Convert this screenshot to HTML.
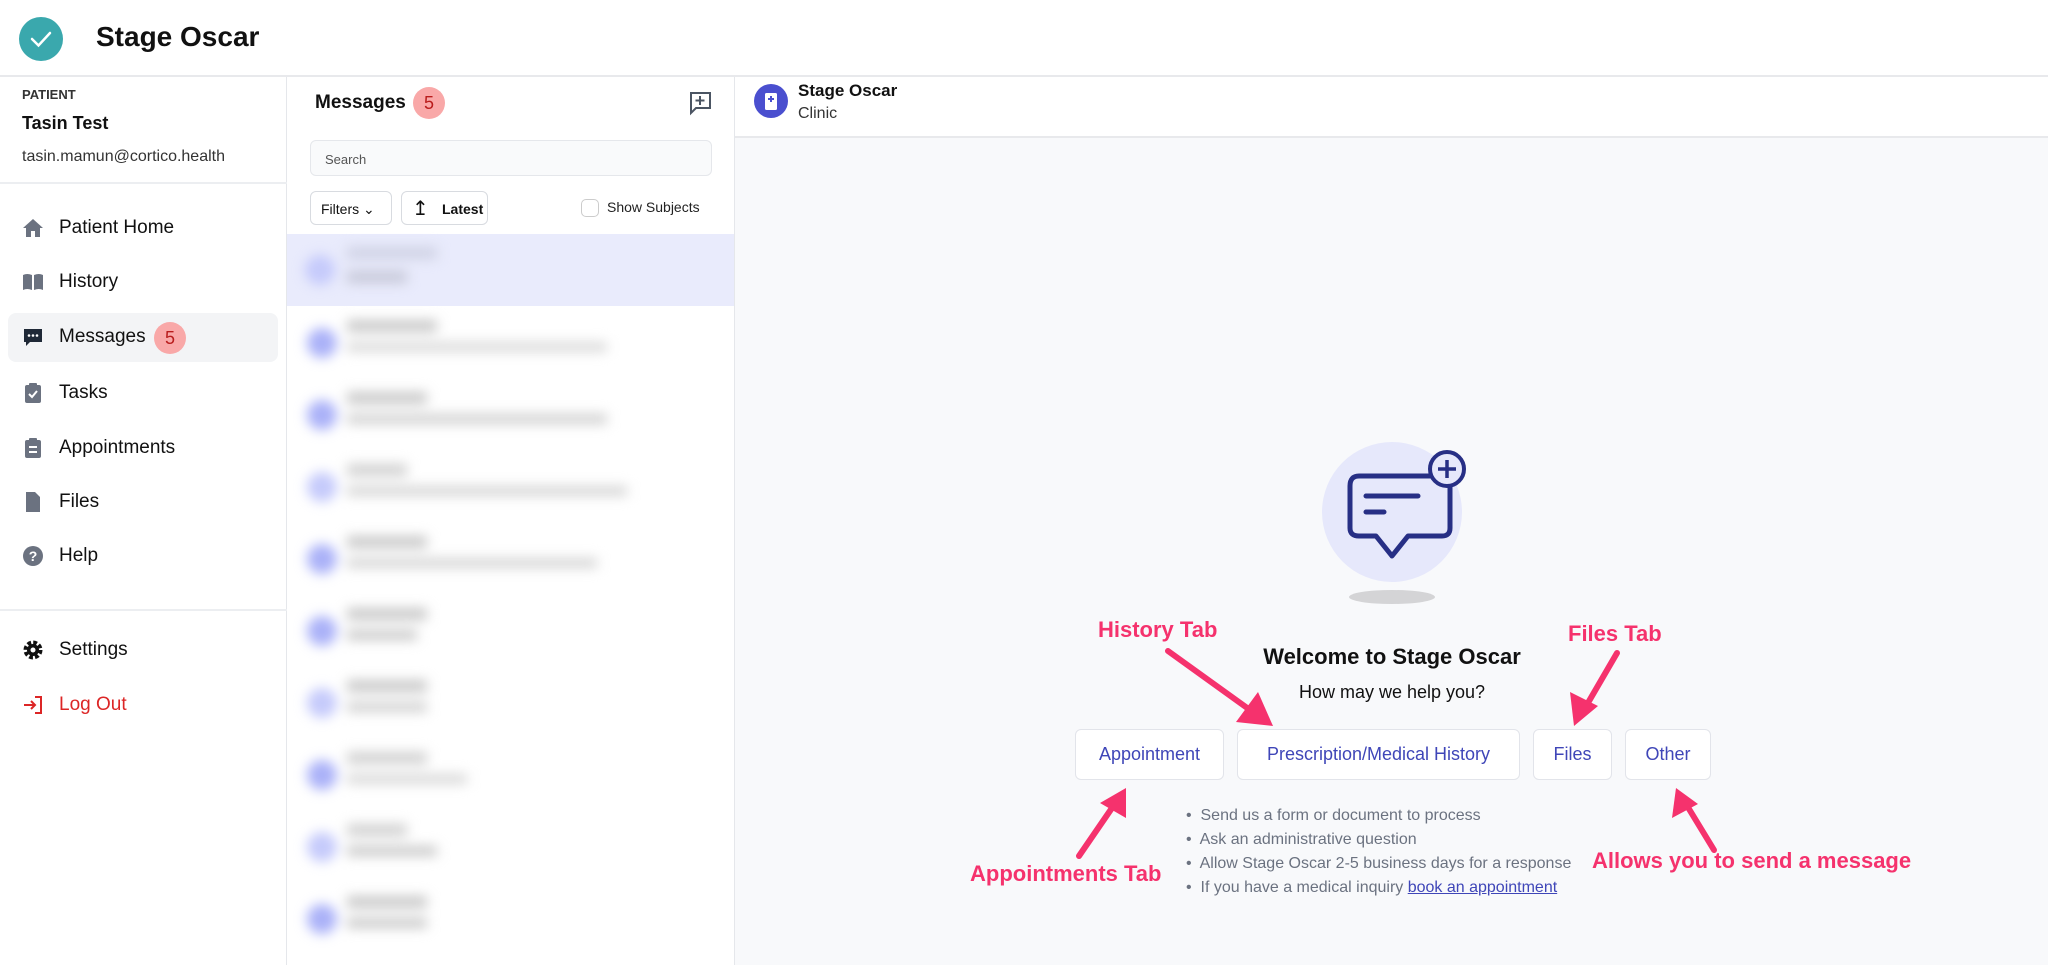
<!DOCTYPE html>
<html><head><meta charset="utf-8"><style>
*{box-sizing:border-box;margin:0;padding:0}
body{width:2048px;height:965px;overflow:hidden;font-family:"Liberation Sans",Arial,sans-serif;background:#fff;color:#111;position:relative}
.abs{position:absolute}
.hdr{left:0;top:0;width:2048px;height:77px;border-bottom:2px solid #e8e9ec;background:#fff}
.side{left:0;top:77px;width:287px;height:888px;border-right:1px solid #e5e7eb;background:#fff}
.nav{position:absolute;left:22px;font-size:19px;color:#111;display:flex;align-items:center}
.nav .t{position:absolute;left:37px;white-space:nowrap}
.msgs{left:287px;top:77px;width:448px;height:888px;border-right:1px solid #e5e7eb;background:#fff;overflow:hidden}
.main{left:735px;top:77px;width:1313px;height:888px;background:#f8f9fb}
.btn{position:absolute;top:729px;height:51px;border:1px solid #e2e4ea;border-radius:6px;background:#fff;color:#3f46b8;font-size:18px;display:flex;align-items:center;justify-content:center}
.ann{position:absolute;color:#f5326d;font-weight:bold;font-size:22px;white-space:nowrap}
.blur{filter:blur(6px)}
.row{position:absolute;left:0;width:448px;height:72px}
</style></head><body>
<div class="abs hdr">
  <svg class="abs" style="left:19px;top:17px" width="44" height="44" viewBox="0 0 44 44"><circle cx="22" cy="22" r="22" fill="#3aa8ad"/><path d="M13 22 L19.5 28.5 L31 16" stroke="#fff" stroke-width="2.5" fill="none" stroke-linecap="round"/></svg>
  <div class="abs" style="left:96px;top:21px;font-size:28px;font-weight:bold">Stage Oscar</div>
</div>
<div class="abs side">
  <div class="abs" style="left:22px;top:10px;font-size:13px;font-weight:bold;color:#333">PATIENT</div>
  <div class="abs" style="left:22px;top:36px;font-size:18px;font-weight:bold">Tasin Test</div>
  <div class="abs" style="left:22px;top:71px;font-size:16px;color:#333">tasin.mamun@cortico.health</div>
  <div class="abs" style="left:0;top:105px;width:287px;height:2px;background:#eceef1"></div>
  <div class="abs" style="left:8px;top:236px;width:270px;height:49px;background:#f3f4f6;border-radius:8px"></div>
  <div class="nav" style="top:140px"><svg width="22" height="22" viewBox="0 0 22 22"><path d="M11 2 L21 11 H18 V20 H13 V14 H9 V20 H4 V11 H1 Z" fill="#6b7280"/></svg><span class="t">Patient Home</span></div>
  <div class="nav" style="top:194px"><svg width="22" height="22" viewBox="0 0 22 22"><path d="M1 4 Q5 2 10 4 V19 Q5 17 1 19 Z M12 4 Q17 2 21 4 V19 Q17 17 12 19 Z" fill="#6b7280"/></svg><span class="t">History</span></div>
  <div class="nav" style="top:249px"><svg width="22" height="22" viewBox="0 0 22 22"><path d="M2 3 H20 V16 H8 L4 20 V16 H2 Z" fill="#1f2937"/><circle cx="7" cy="9.5" r="1.3" fill="#fff"/><circle cx="11" cy="9.5" r="1.3" fill="#fff"/><circle cx="15" cy="9.5" r="1.3" fill="#fff"/></svg><span class="t">Messages</span></div>
  <div class="abs" style="left:154px;top:245px;width:32px;height:32px;border-radius:50%;background:#f9a8a8;color:#b91c1c;font-size:18px;text-align:center;line-height:32px">5</div>
  <div class="nav" style="top:305px"><svg width="22" height="22" viewBox="0 0 22 22"><rect x="3" y="3" width="16" height="18" rx="2" fill="#6b7280"/><rect x="7" y="1" width="8" height="4" rx="1" fill="#6b7280"/><path d="M7 12 L10 15 L15 9" stroke="#fff" stroke-width="2" fill="none"/></svg><span class="t">Tasks</span></div>
  <div class="nav" style="top:360px"><svg width="22" height="22" viewBox="0 0 22 22"><rect x="3" y="3" width="16" height="18" rx="2" fill="#6b7280"/><rect x="7" y="1" width="8" height="4" rx="1" fill="#6b7280"/><rect x="7" y="9" width="8" height="2" fill="#fff"/><rect x="7" y="14" width="8" height="2" fill="#fff"/></svg><span class="t">Appointments</span></div>
  <div class="nav" style="top:414px"><svg width="22" height="22" viewBox="0 0 22 22"><path d="M4 1 H13 L18 6 V21 H4 Z" fill="#6b7280"/></svg><span class="t">Files</span></div>
  <div class="nav" style="top:468px"><svg width="22" height="22" viewBox="0 0 22 22"><circle cx="11" cy="11" r="10" fill="#6b7280"/><text x="11" y="16" font-size="14" font-weight="bold" fill="#fff" text-anchor="middle" font-family="Liberation Sans">?</text></svg><span class="t">Help</span></div>
  <div class="abs" style="left:0;top:532px;width:287px;height:2px;background:#eceef1"></div>
  <div class="nav" style="top:562px"><svg width="22" height="22" viewBox="0 0 22 22"><circle cx="11" cy="11" r="7" fill="none" stroke="#111" stroke-width="5" stroke-dasharray="3.5 2"/><circle cx="11" cy="11" r="6" fill="#111"/><circle cx="11" cy="11" r="2.5" fill="#fff"/></svg><span class="t">Settings</span></div>
  <div class="nav" style="top:617px;color:#dc2626"><svg width="22" height="22" viewBox="0 0 22 22"><path d="M13 3 H19 V19 H13 M2 11 H13 M9 7 L13 11 L9 15" stroke="#dc2626" stroke-width="2" fill="none"/></svg><span class="t">Log Out</span></div>
</div>
<div class="abs msgs">
  <div class="abs" style="left:28px;top:15px;font-size:19px;font-weight:bold">Messages</div>
  <div class="abs" style="left:126px;top:10px;width:32px;height:32px;border-radius:50%;background:#f9a8a8;color:#b91c1c;font-size:18px;text-align:center;line-height:32px">5</div>
  <svg class="abs" style="left:400px;top:13px" width="26" height="26" viewBox="0 0 26 26"><path d="M3 3 H23 V18 H9 L4 23 V3" stroke="#4b5563" stroke-width="2" fill="none"/><path d="M13 6 V15 M8.5 10.5 H17.5" stroke="#4b5563" stroke-width="2"/></svg>
  <div class="abs" style="left:23px;top:63px;width:402px;height:36px;border:1px solid #e5e7eb;border-radius:6px;background:#f9fafb;font-size:13px;color:#555;padding:11px 14px">Search</div>
  <div class="abs" style="left:23px;top:114px;width:82px;height:34px;border:1px solid #d8dbe0;border-radius:6px;font-size:14px;padding:9px 10px">Filters ⌄</div>
  <div class="abs" style="left:114px;top:114px;width:87px;height:34px;border:1px solid #d8dbe0;border-radius:6px;font-size:14px;padding:9px 8px 0 40px;font-weight:bold">Latest<span class="abs" style="left:10px;top:4px;font-size:20px;font-weight:normal">↥</span></div>
  <div class="abs" style="left:294px;top:122px;width:18px;height:18px;border:1px solid #ccc;border-radius:5px"></div>
  <div class="abs" style="left:320px;top:122px;font-size:14px;color:#222">Show Subjects</div>
  <div class="row" style="top:157px;background:#e9ebfc"></div>
  <div class="blur">
  <div class="abs" style="left:18px;top:178px;width:30px;height:30px;border-radius:50%;background:#c5cafb"></div>
  <div class="abs" style="left:60px;top:170px;width:90px;height:12px;background:#cfd2e4"></div>
  <div class="abs" style="left:60px;top:194px;width:60px;height:12px;background:#c6c8d8"></div>
  <div class="abs" style="left:20px;top:251px;width:30px;height:30px;border-radius:50%;background:#aab1f8"></div>
  <div class="abs" style="left:60px;top:243px;width:90px;height:12px;background:#c8c8c8"></div>
  <div class="abs" style="left:60px;top:265px;width:260px;height:10px;background:#dadada"></div>
  <div class="abs" style="left:20px;top:323px;width:30px;height:30px;border-radius:50%;background:#aab1f8"></div>
  <div class="abs" style="left:60px;top:315px;width:80px;height:12px;background:#c8c8c8"></div>
  <div class="abs" style="left:60px;top:337px;width:260px;height:10px;background:#d0d0d0"></div>
  <div class="abs" style="left:20px;top:395px;width:30px;height:30px;border-radius:50%;background:#c5cafb"></div>
  <div class="abs" style="left:60px;top:387px;width:60px;height:12px;background:#d0d0d0"></div>
  <div class="abs" style="left:60px;top:409px;width:280px;height:10px;background:#d5d5d5"></div>
  <div class="abs" style="left:20px;top:467px;width:30px;height:30px;border-radius:50%;background:#aab1f8"></div>
  <div class="abs" style="left:60px;top:459px;width:80px;height:12px;background:#c8c8c8"></div>
  <div class="abs" style="left:60px;top:481px;width:250px;height:10px;background:#d5d5d5"></div>
  <div class="abs" style="left:20px;top:539px;width:30px;height:30px;border-radius:50%;background:#aab1f8"></div>
  <div class="abs" style="left:60px;top:531px;width:80px;height:12px;background:#c8c8c8"></div>
  <div class="abs" style="left:60px;top:553px;width:70px;height:10px;background:#c8c8c8"></div>
  <div class="abs" style="left:20px;top:611px;width:30px;height:30px;border-radius:50%;background:#c5cafb"></div>
  <div class="abs" style="left:60px;top:603px;width:80px;height:12px;background:#c8c8c8"></div>
  <div class="abs" style="left:60px;top:625px;width:80px;height:10px;background:#d0d0d0"></div>
  <div class="abs" style="left:20px;top:683px;width:30px;height:30px;border-radius:50%;background:#aab1f8"></div>
  <div class="abs" style="left:60px;top:675px;width:80px;height:12px;background:#d0d0d0"></div>
  <div class="abs" style="left:60px;top:697px;width:120px;height:10px;background:#d8d8d8"></div>
  <div class="abs" style="left:20px;top:755px;width:30px;height:30px;border-radius:50%;background:#c5cafb"></div>
  <div class="abs" style="left:60px;top:747px;width:60px;height:12px;background:#d0d0d0"></div>
  <div class="abs" style="left:60px;top:769px;width:90px;height:10px;background:#c8c8c8"></div>
  <div class="abs" style="left:20px;top:827px;width:30px;height:30px;border-radius:50%;background:#aab1f8"></div>
  <div class="abs" style="left:60px;top:819px;width:80px;height:12px;background:#c8c8c8"></div>
  <div class="abs" style="left:60px;top:841px;width:80px;height:10px;background:#c8c8c8"></div>
  </div>
</div>
<div class="abs main">
  <div class="abs" style="left:0;top:0;width:1313px;height:61px;background:#fff;border-bottom:2px solid #e8e9ec"></div>
  <svg class="abs" style="left:19px;top:7px" width="34" height="34" viewBox="0 0 34 34"><circle cx="17" cy="17" r="17" fill="#4a4fcf"/><rect x="11" y="9" width="12" height="17" rx="1.5" fill="#fff"/><path d="M17 12 V18 M14 15 H20" stroke="#4a4fcf" stroke-width="2"/></svg>
  <div class="abs" style="left:63px;top:4px;font-size:17px;font-weight:bold">Stage Oscar</div>
  <div class="abs" style="left:63px;top:28px;font-size:16px;color:#333">Clinic</div>
</div>
<svg class="abs" style="left:1300px;top:430px" width="200" height="180" viewBox="1300 430 200 180">
  <ellipse cx="1392" cy="597" rx="43" ry="7" fill="#d4d4d6"/>
  <circle cx="1392" cy="512" r="70" fill="#e6e8fb"/>
  <path d="M1359 476 H1440 Q1450 476 1450 486 V528 Q1450 536 1442 536 H1408 L1392 556 L1376 536 H1359 Q1350 536 1350 528 V486 Q1350 476 1359 476 Z" fill="none" stroke="#272f85" stroke-width="5" stroke-linejoin="round"/>
  <path d="M1366 496 H1418 M1366 512 H1384" stroke="#272f85" stroke-width="5" stroke-linecap="round"/>
  <circle cx="1447" cy="469" r="17" fill="#e6e8fb" stroke="#272f85" stroke-width="4"/>
  <path d="M1447 460 V478 M1438 469 H1456" stroke="#272f85" stroke-width="3.5"/>
</svg>
<div class="abs" style="left:1192px;top:644px;width:400px;text-align:center;font-size:22px;font-weight:bold">Welcome to Stage Oscar</div>
<div class="abs" style="left:1192px;top:682px;width:400px;text-align:center;font-size:18px">How may we help you?</div>
<div class="btn" style="left:1075px;width:149px">Appointment</div>
<div class="btn" style="left:1237px;width:283px">Prescription/Medical History</div>
<div class="btn" style="left:1533px;width:79px">Files</div>
<div class="btn" style="left:1625px;width:86px">Other</div>
<div class="abs" style="left:1186px;top:804px;font-size:16px;color:#6b7280;line-height:24px">
  <div>•&nbsp; Send us a form or document to process</div>
  <div>•&nbsp; Ask an administrative question</div>
  <div>•&nbsp; Allow Stage Oscar 2-5 business days for a response</div>
  <div>•&nbsp; If you have a medical inquiry <span style="color:#3f46b8;text-decoration:underline">book an appointment</span></div>
</div>
<div class="ann" style="left:1098px;top:617px">History Tab</div>
<div class="ann" style="left:1568px;top:621px">Files Tab</div>
<div class="ann" style="left:970px;top:861px">Appointments Tab</div>
<div class="ann" style="left:1592px;top:848px">Allows you to send a message</div>
<svg class="abs" style="left:0;top:0" width="2048" height="965">
  <g stroke="#f5326d" stroke-width="6" stroke-linecap="round" fill="#f5326d">
    <line x1="1168" y1="651" x2="1250" y2="710"/>
    <line x1="1617" y1="653" x2="1585" y2="708"/>
    <line x1="1079" y1="856" x2="1114" y2="805"/>
    <line x1="1714" y1="850" x2="1686" y2="804"/>
  </g>
  <g fill="#f5326d">
    <polygon points="1273,726 1236,722 1258,692"/>
    <polygon points="1574,726 1570,692 1598,706"/>
    <polygon points="1126,788 1100,803 1126,818"/>
    <polygon points="1676,788 1672,818 1698,804"/>
  </g>
</svg>
</body></html>
